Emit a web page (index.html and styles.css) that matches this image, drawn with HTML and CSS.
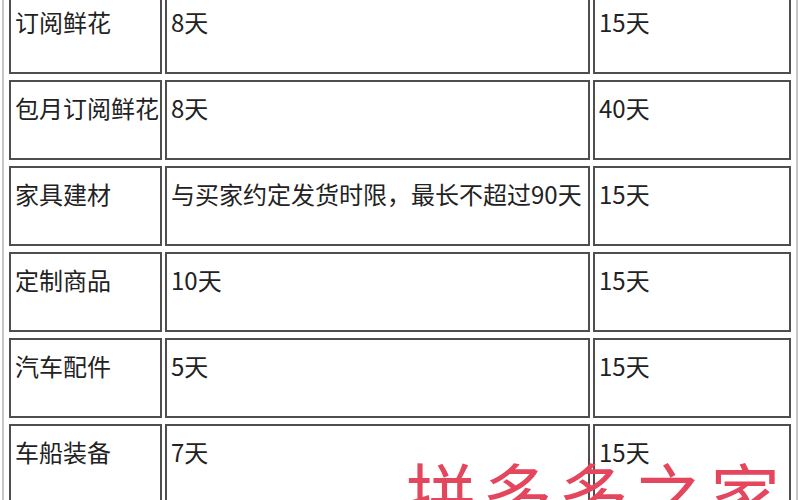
FILE: index.html
```html
<!DOCTYPE html>
<html lang="zh">
<head>
<meta charset="utf-8">
<title>发货时限</title>
<link rel="stylesheet" href="styles.css">
</head>
<body>
<div class="page">
  <table class="ship">
    <tbody>
      <tr><td class="c1">订阅鲜花</td><td class="c2">8天</td><td class="c3">15天</td></tr>
      <tr><td class="c1">包月订阅鲜花</td><td class="c2">8天</td><td class="c3">40天</td></tr>
      <tr><td class="c1">家具建材</td><td class="c2">与买家约定发货时限，最长不超过90天</td><td class="c3">15天</td></tr>
      <tr><td class="c1">定制商品</td><td class="c2">10天</td><td class="c3">15天</td></tr>
      <tr><td class="c1">汽车配件</td><td class="c2">5天</td><td class="c3">15天</td></tr>
      <tr><td class="c1">车船装备</td><td class="c2">7天</td><td class="c3">15天</td></tr>
    </tbody>
  </table>
  <div class="watermark">拼多多之家</div>
</div>
</body>
</html>
```

FILE: styles.css
```css
html, body {
  margin: 0;
  padding: 0;
  background: #ffffff;
}
body {
  width: 800px;
  height: 500px;
  overflow: hidden;
  font-family: "Noto Sans CJK SC", "Microsoft YaHei", sans-serif;
}
.page {
  position: relative;
  width: 800px;
  height: 500px;
  overflow: hidden;
}
.ship {
  margin: -16px 0 0 2px;
  border: 2px solid #c6c6c6;
  padding: 2px;
  border-collapse: separate;
  border-spacing: 3px 6px;
  table-layout: fixed;
}
.ship tr {
  height: 80px;
}
.ship td {
  border: 2px solid #4e4e4e;
  padding: 11px 0 0 4px;
  vertical-align: top;
  font-size: 24px;
  line-height: 30px;
  color: #222222;
  white-space: nowrap;
}
.ship .c1 { width: 145px; }
.ship .c2 { width: 417px; }
.ship .c3 { width: 190px; }
.watermark {
  position: absolute;
  left: 406px;
  top: 458px;
  font-size: 70px;
  line-height: 1;
  letter-spacing: 6px;
  color: #e4475d;
  white-space: nowrap;
}
```
